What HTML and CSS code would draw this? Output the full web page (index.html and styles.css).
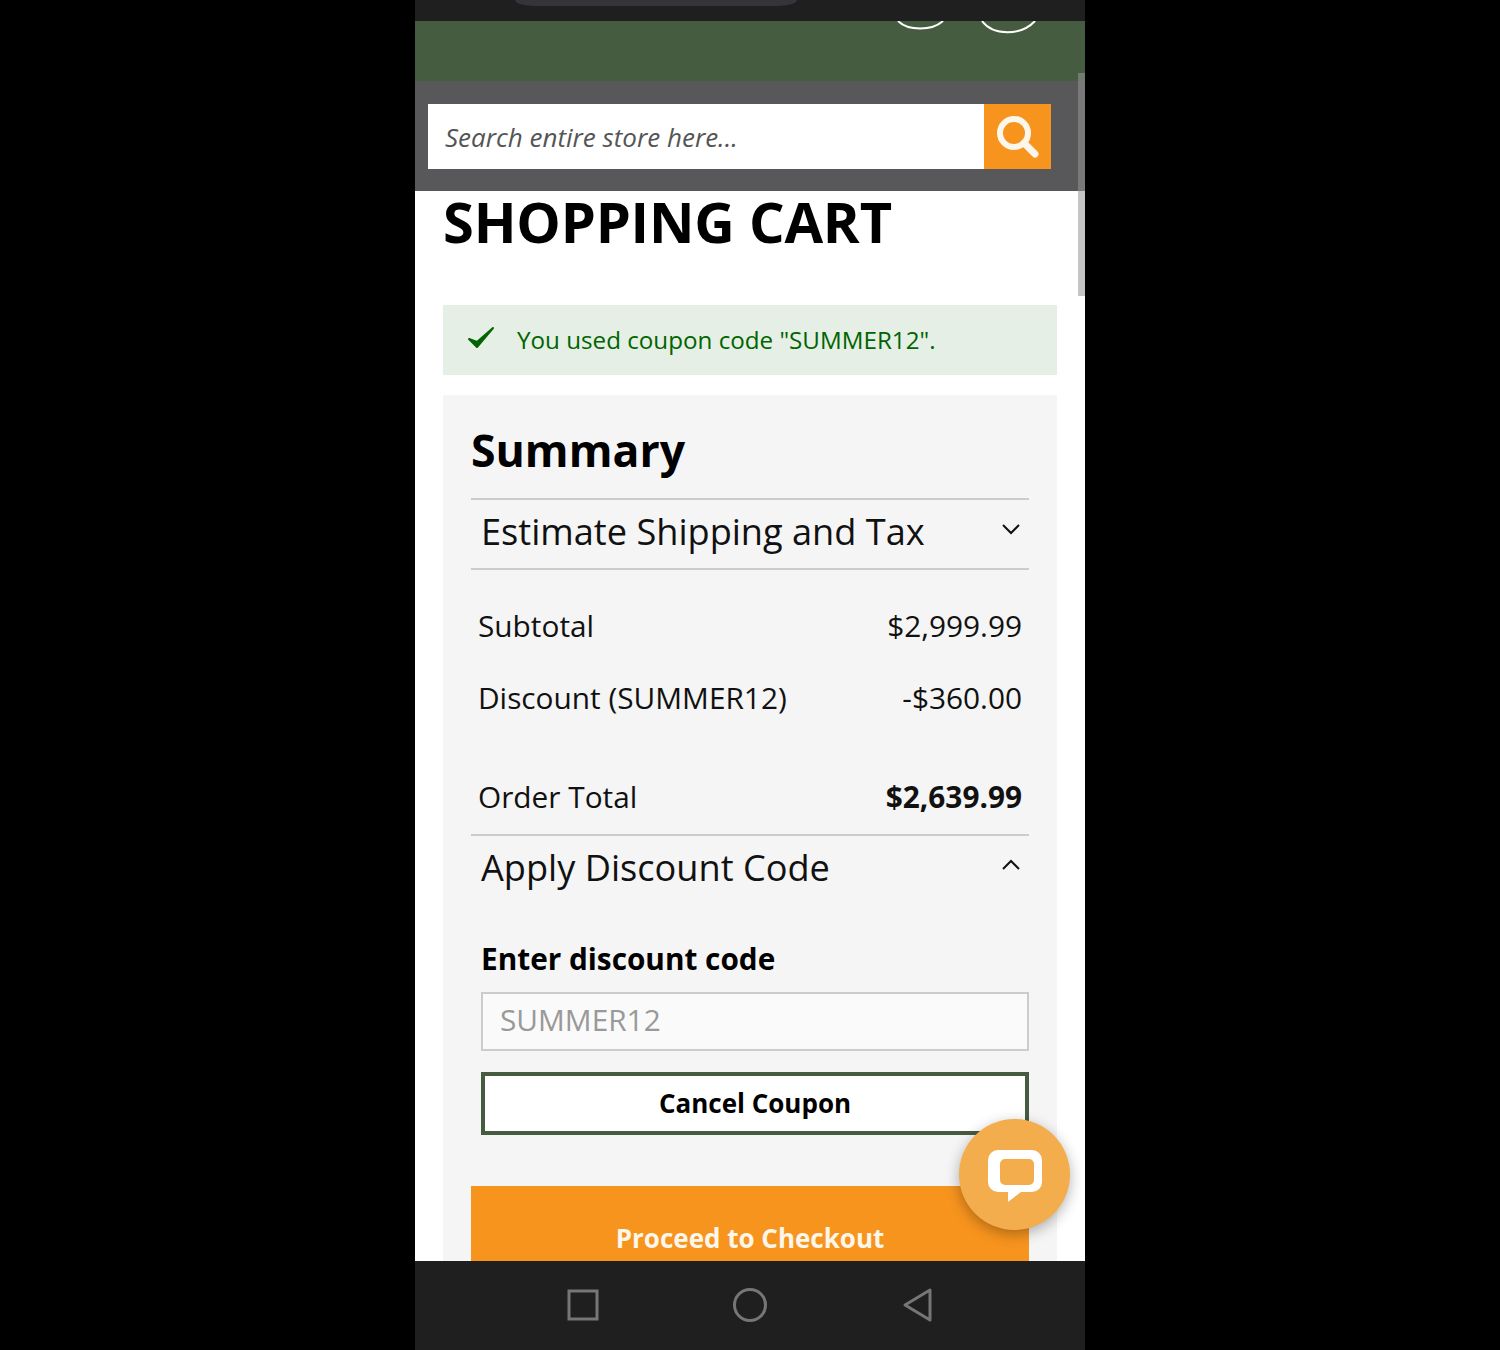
FILE: index.html
```html
<!DOCTYPE html>
<html lang="en">
<head>
    <meta charset="UTF-8">
    <title>Shopping Cart</title>
    <link rel="stylesheet" href="styles.css">
</head>
<body>
<div class="phone">
    <div class="status-bar"><div class="notch"></div></div>

    <div class="screen">
        <header class="site-header">
            <svg class="header-arc arc-one" width="50" height="12" viewBox="0 0 50 12"><path d="M2 0C12 10 36 10 47 0" fill="none" stroke="#fff" stroke-width="2"/></svg>
            <svg class="header-arc arc-two" width="60" height="14" viewBox="0 0 60 14"><path d="M3 0C14 15 42 15 56 0" fill="none" stroke="#fff" stroke-width="2"/></svg>
        </header>

        <div class="search-band">
            <div class="search-box">
                <div class="search-input">Search entire store here...</div>
                <div class="search-button">
                    <svg width="48" height="48" viewBox="0 0 48 48"><circle cx="20" cy="20" r="14" fill="none" stroke="#fdf6ea" stroke-width="6"/><path d="M30 30L41 41" stroke="#fdf6ea" stroke-width="7" stroke-linecap="round"/></svg>
                </div>
            </div>
        </div>

        <main class="cart">
            <h1 class="page-title">SHOPPING CART</h1>

            <div class="message">
                <svg class="message-icon" width="28" height="24" viewBox="0 0 28 24"><path d="M2 13L10 21L26 2L10 16Z" fill="#006400" stroke="#006400" stroke-width="2" stroke-linejoin="round"/></svg>
                <span>You used coupon code "SUMMER12".</span>
            </div>

            <section class="summary">
                <h2 class="summary-title">Summary</h2>

                <div class="accordion accordion-shipping">
                    <span>Estimate Shipping and Tax</span>
                    <svg width="20" height="12" viewBox="0 0 20 12"><path d="M2 2L10 10L18 2" fill="none" stroke="#111" stroke-width="2"/></svg>
                </div>

                <div class="totals">
                    <div class="total-row"><span>Subtotal</span><span>$2,999.99</span></div>
                    <div class="total-row"><span>Discount (SUMMER12)</span><span>-$360.00</span></div>
                    <div class="total-row grand-total"><span>Order Total</span><strong>$2,639.99</strong></div>
                </div>

                <div class="accordion accordion-discount">
                    <span>Apply Discount Code</span>
                    <svg width="20" height="12" viewBox="0 0 20 12"><path d="M2 10L10 2L18 10" fill="none" stroke="#111" stroke-width="2"/></svg>
                </div>

                <div class="discount-form">
                    <label class="discount-label">Enter discount code</label>
                    <div class="discount-input">SUMMER12</div>
                    <div class="cancel-button">Cancel Coupon</div>
                </div>

                <div class="checkout-button">Proceed to Checkout</div>
            </section>
        </main>

        <div class="chat-bubble">
            <svg width="54" height="52" viewBox="0 0 54 52"><path fill-rule="evenodd" d="M10 0H44A10 10 0 0 1 54 10V32A10 10 0 0 1 44 42H33L20 52V42H10A10 10 0 0 1 0 32V10A10 10 0 0 1 10 0ZM17 9A5 5 0 0 0 12 14V30A5 5 0 0 0 17 35H41A5 5 0 0 0 46 30V14A5 5 0 0 0 41 9Z" fill="#fff"/></svg>
        </div>
        <div class="scroll-thumb"></div>
    </div>

    <nav class="nav-bar">
        <svg width="32" height="34" viewBox="0 0 32 34"><rect x="4" y="3" width="28" height="28" fill="none" stroke="#767676" stroke-width="3"/></svg>
        <svg width="36" height="36" viewBox="0 0 36 36"><circle cx="18" cy="18" r="15.5" fill="none" stroke="#767676" stroke-width="3"/></svg>
        <svg width="32" height="36" viewBox="0 0 32 36"><path d="M27 3V33L2 18Z" fill="none" stroke="#767676" stroke-width="3" stroke-linejoin="round"/></svg>
    </nav>
</div>
</body>
</html>
```

FILE: styles.css
```css
html, body {
    margin: 0;
    height: 100%;
    background: #000;
}

body {
    font-family: "Open Sans", "Liberation Sans", sans-serif;
    color: #111;
    overflow: hidden;
}

.phone {
    width: 670px;
    height: 1350px;
    margin: 0 auto;
    display: flex;
    flex-direction: column;
}

/* Top status bar */
.status-bar {
    height: 21px;
    flex: none;
    background: #1f1f1f;
    padding-left: 100px;
}

.notch {
    width: 282px;
    height: 6px;
    background: #34343a;
    border-radius: 0 0 20px 20px / 0 0 6px 6px;
}

.screen {
    position: relative;
    flex: 1;
    min-height: 0;
    overflow: hidden;
    background: #fff;
}

/* Green header + search */
.site-header {
    position: relative;
    height: 60px;
    background: #465c41;
}

.header-arc {
    position: absolute;
    top: 0;
}

.arc-one { left: 481px; }
.arc-two { left: 564px; }

.search-band {
    height: 110px;
    box-sizing: border-box;
    padding: 23px 34px 0 13px;
    background: #58585a;
}

.search-box {
    display: flex;
    height: 65px;
    background: #fff;
}

.search-input {
    flex: 1;
    padding: 0 17px;
    line-height: 67px;
    font-size: 26px;
    font-style: italic;
    color: #555;
}

.search-button {
    width: 67px;
    display: flex;
    align-items: center;
    justify-content: center;
    background: #f7941e;
}

/* Cart */
.cart {
    padding: 0 28px;
}

.page-title {
    margin: 0 0 50px;
    height: 64px;
    font-size: 56px;
    letter-spacing: -0.2px;
    line-height: 60px;
    font-weight: 700;
    color: #000;
}

.message {
    height: 70px;
    box-sizing: border-box;
    padding: 0 0 2px 24px;
    display: flex;
    align-items: center;
    gap: 22px;
    background: #e5efe5;
    color: #006400;
    font-size: 24.2px;
}

.message-icon {
    margin-bottom: 2px;
}

.summary {
    margin-top: 20px;
    padding: 0 28px;
    background: #f5f5f5;
}

.summary-title {
    margin: 0;
    height: 103px;
    box-sizing: border-box;
    padding-top: 23px;
    font-size: 44.6px;
    line-height: 64px;
    font-weight: 700;
    color: #000;
}

.accordion {
    display: flex;
    justify-content: space-between;
    padding: 0 8px 0 10px;
    border-top: 2px solid #ccc;
    font-size: 36.15px;
    line-height: 62px;
}

.accordion svg {
    margin-top: 23px;
}

.accordion-shipping {
    height: 68px;
    border-bottom: 2px solid #ccc;
}

.accordion-discount {
    height: 66px;
}

.totals {
    padding: 19px 7px 0;
    font-size: 29.8px;
}

.total-row {
    display: flex;
    justify-content: space-between;
    height: 72px;
    line-height: 73px;
}

.grand-total {
    height: 74px;
    margin-top: 27px;
    line-height: 74px;
}

.discount-form {
    margin-left: 10px;
    padding-top: 37px;
}

.discount-label {
    display: block;
    font-size: 29.75px;
    line-height: 40px;
    font-weight: 700;
    color: #000;
}

.discount-input {
    height: 55px;
    margin-top: 13px;
    padding-left: 17px;
    border: 2px solid #ccc;
    background: #fafafa;
    color: #999;
    font-size: 29.8px;
    line-height: 52px;
}

.cancel-button {
    height: 55px;
    margin-top: 21px;
    border: 4px solid #465c41;
    background: #fff;
    color: #000;
    font-size: 26px;
    font-weight: 700;
    line-height: 55px;
    text-align: center;
}

.checkout-button {
    height: 100px;
    margin-top: 51px;
    padding-top: 30px;
    box-sizing: border-box;
    background: #f7941e;
    color: #fdf6ea;
    font-size: 26px;
    font-weight: 700;
    line-height: 44px;
    text-align: center;
}

/* Floating widgets */
.chat-bubble {
    position: absolute;
    left: 544px;
    top: 1098px;
    width: 111px;
    height: 111px;
    box-sizing: border-box;
    padding-top: 2px;
    display: flex;
    align-items: center;
    justify-content: center;
    border-radius: 50%;
    background: #f4ad4d;
    box-shadow: 0 4px 14px rgba(0, 0, 0, 0.3);
}

.scroll-thumb {
    position: absolute;
    right: 0;
    top: 52px;
    width: 7px;
    height: 223px;
    background: rgba(150, 150, 150, 0.55);
}

/* Android nav */
.nav-bar {
    height: 89px;
    flex: none;
    box-sizing: border-box;
    padding-bottom: 2px;
    display: flex;
    align-items: center;
    justify-content: center;
    gap: 135px;
    background: #1f1f1f;
}

.nav-bar svg {
    overflow: visible;
}
```
